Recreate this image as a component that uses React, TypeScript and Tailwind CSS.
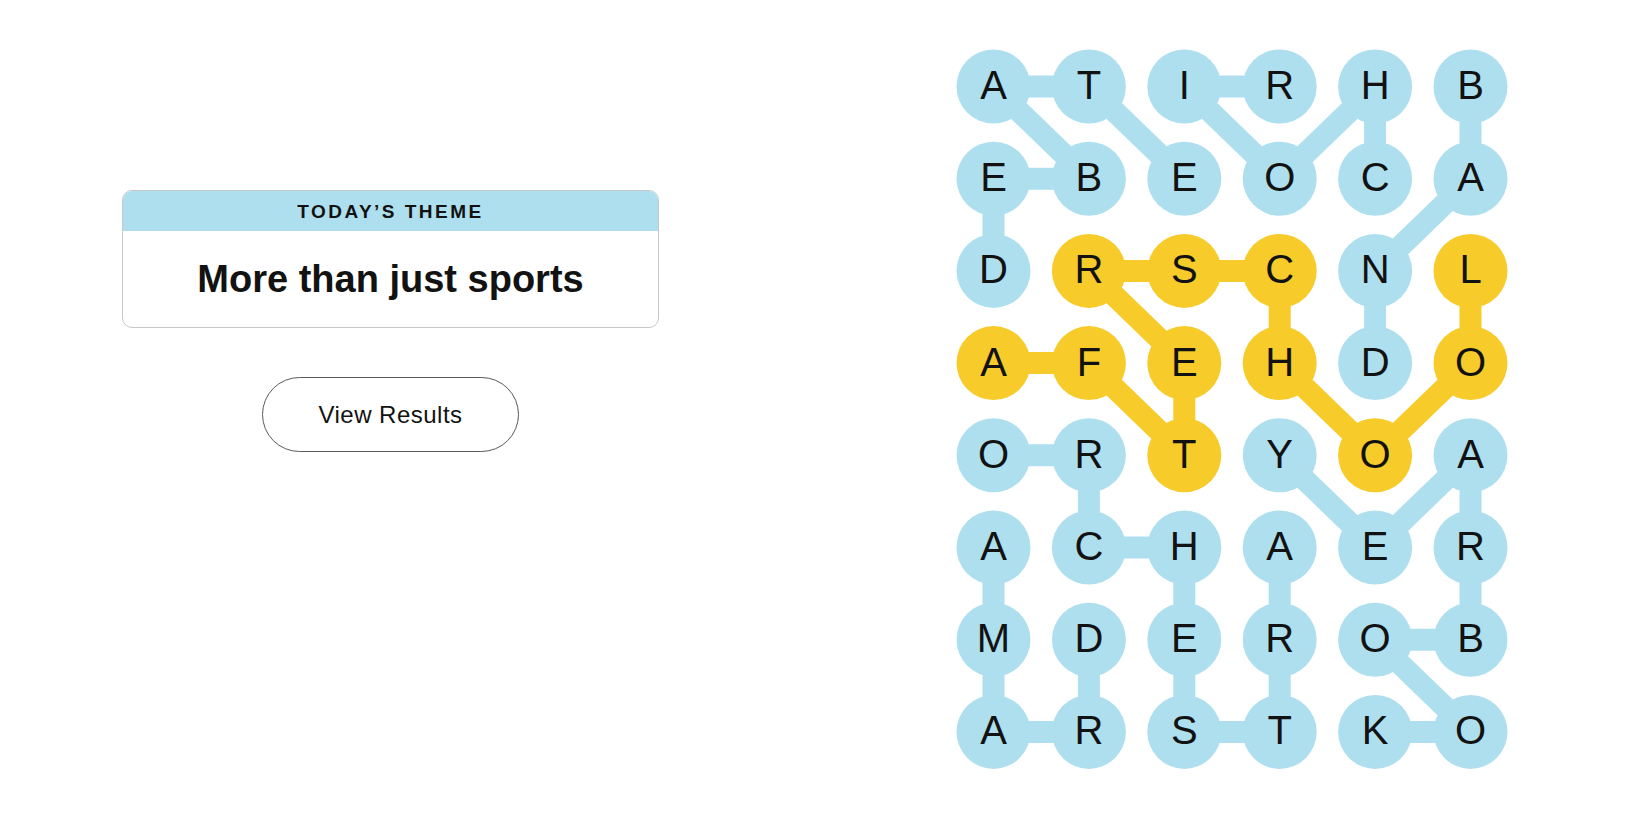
import React from "react";

const BLUE = "#aedfee";
const YELLOW = "#f7cb2a";

const GRID = [
  "ATIRHB",
  "EBEOCA",
  "DRSCNL",
  "AFEHDO",
  "ORTYOA",
  "ACHAER",
  "MDEROB",
  "ARSTKO",
];

// spangram cells, [row, col]
const SPANGRAM: [number, number][] = [
  [3, 0], [3, 1], [4, 2], [3, 2], [2, 1], [2, 2], [2, 3], [3, 3], [4, 4], [3, 5], [2, 5],
];

const WORDS: [number, number][][] = [
  [[2, 0], [1, 0], [1, 1], [0, 0], [0, 1], [1, 2]], // debate
  [[1, 4], [0, 4], [1, 3], [0, 2], [0, 3]], // choir
  [[0, 5], [1, 5], [2, 4], [3, 4]], // band
  [[4, 0], [4, 1], [5, 1], [5, 2], [6, 2], [7, 2], [7, 3], [6, 3], [5, 3]], // orchestra
  [[6, 1], [7, 1], [7, 0], [6, 0], [5, 0]], // drama
  [[4, 3], [5, 4], [4, 5], [5, 5], [6, 5], [6, 4], [7, 5], [7, 4]], // yearbook
];

const cx = (c: number) => 43.5 + c * 95.4;
const cy = (r: number) => 46.5 + r * 92.2;

const isSpan = (r: number, c: number) => SPANGRAM.some(([a, b]) => a === r && b === c);

const Path = ({ cells, color }: { cells: [number, number][]; color: string }) => (
  <polyline
    points={cells.map(([r, c]) => `${cx(c)},${cy(r)}`).join(" ")}
    fill="none"
    stroke={color}
    strokeWidth={22}
    strokeLinejoin="round"
  />
);

const Board = () => (
  <svg width={560} height={740} className="mt-[40px] ml-[169px] shrink-0">
    {WORDS.map((w, i) => (
      <Path key={i} cells={w} color={BLUE} />
    ))}
    <Path cells={SPANGRAM} color={YELLOW} />
    {GRID.map((row, r) =>
      row.split("").map((ch, c) => (
        <g key={`${r}-${c}`}>
          <circle cx={cx(c)} cy={cy(r)} r={37} fill={isSpan(r, c) ? YELLOW : BLUE} />
          <text
            x={cx(c)}
            y={cy(r) + 12.5}
            textAnchor="middle"
            fontSize={40}
            fill="#121212"
            fontFamily="'Liberation Sans', Arial, sans-serif"
          >
            {ch}
          </text>
        </g>
      )),
    )}
  </svg>
);

export default function App() {
  return (
    <div className="flex items-start w-full h-[825px] bg-white overflow-hidden font-['Liberation_Sans',Arial,sans-serif] text-[#121212]">
      <div className="w-[781px] shrink-0 flex flex-col items-center pt-[190px]">
        <div className="w-[537px] rounded-[10px] border border-[#c8c8c8] overflow-hidden">
          <div className="h-[40px] bg-[#aedfee] flex items-center justify-center text-[19px] font-bold tracking-[0.13em] leading-none">
            TODAY’S THEME
          </div>
          <div className="h-[96px] flex items-center justify-center text-[38px] font-bold leading-none">
            More than just sports
          </div>
        </div>
        <button className="mt-[49px] w-[257px] h-[75px] rounded-full border border-[#5a5a5a] bg-white text-[24px] tracking-[0.02em] flex items-center justify-center">
          View Results
        </button>
      </div>
      <Board />
    </div>
  );
}
